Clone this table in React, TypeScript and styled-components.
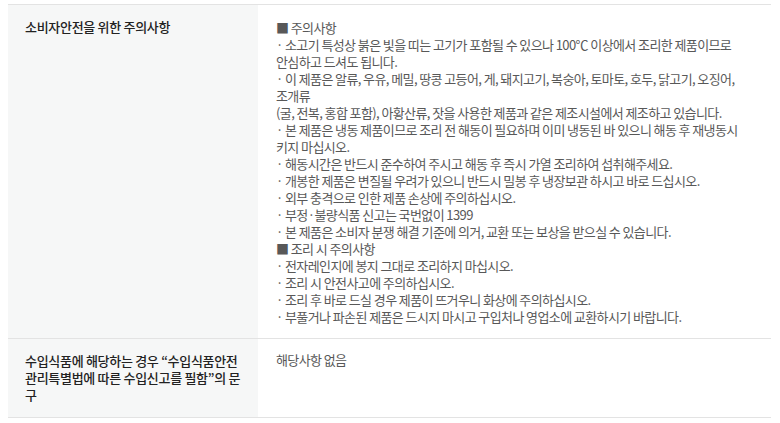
import React from 'react';
import styled, { createGlobalStyle } from 'styled-components';

const GlobalStyle = createGlobalStyle`
	body {
		margin: 0;
		background: #fff;
		font-family: "Noto Sans CJK KR", "Noto Sans", sans-serif;
	}
`;

const Wrapper = styled.div`
	padding: 4px 0 0 8px;
`;

const Table = styled.table`
	width: 763px;
	border-collapse: collapse;
	border-top: 1px solid #e3e3e3;
	table-layout: fixed;
`;

const Row = styled.tr`
	border-bottom: 1px solid #e3e3e3;
`;

const Label = styled.th`
	width: 250px;
	box-sizing: border-box;
	background: #f6f7f7;
	padding: 13px 17px 14px 17px;
	text-align: left;
	vertical-align: top;
	font-size: 13px;
	font-weight: 500;
	line-height: 17px;
	color: #222;
	letter-spacing: -0.3px;
`;

const Value = styled.td`
	padding: 14px 18px 13px 18px;
	vertical-align: top;
	font-size: 13px;
	line-height: 17px;
	color: #585858;
	letter-spacing: -0.6px;
`;

const Line = styled.div`
	white-space: nowrap;
`;

const Empty = styled.div`
	margin-top: -2px;
`;

const caution = [
	'■ 주의사항',
	'· 소고기 특성상 붉은 빛을 띠는 고기가 포함될 수 있으나 100℃ 이상에서 조리한 제품이므로',
	'안심하고 드셔도 됩니다.',
	'· 이 제품은 알류, 우유, 메밀, 땅콩 고등어, 게, 돼지고기, 복숭아, 토마토, 호두, 닭고기, 오징어,',
	'조개류',
	'(굴, 전복, 홍합 포함), 아황산류, 잣을 사용한 제품과 같은 제조시설에서 제조하고 있습니다.',
	'· 본 제품은 냉동 제품이므로 조리 전 해동이 필요하며 이미 냉동된 바 있으니 해동 후 재냉동시',
	'키지 마십시오.',
	'· 해동시간은 반드시 준수하여 주시고 해동 후 즉시 가열 조리하여 섭취해주세요.',
	'· 개봉한 제품은 변질될 우려가 있으니 반드시 밀봉 후 냉장보관 하시고 바로 드십시오.',
	'· 외부 충격으로 인한 제품 손상에 주의하십시오.',
	'· 부정·불량식품 신고는 국번없이 1399',
	'· 본 제품은 소비자 분쟁 해결 기준에 의거, 교환 또는 보상을 받으실 수 있습니다.',
	'■ 조리 시 주의사항',
	'· 전자레인지에 봉지 그대로 조리하지 마십시오.',
	'· 조리 시 안전사고에 주의하십시오.',
	'· 조리 후 바로 드실 경우 제품이 뜨거우니 화상에 주의하십시오.',
	'· 부풀거나 파손된 제품은 드시지 마시고 구입처나 영업소에 교환하시기 바랍니다.',
];

const App: React.FC = () => {
	return (
		<Wrapper>
			<GlobalStyle />
			<Table>
				<tbody>
					<Row>
						<Label>소비자안전을 위한 주의사항</Label>
						<Value>
							{caution.map((text, i) => (
								<Line key={i}>{text}</Line>
							))}
						</Value>
					</Row>
					<Row>
						<Label>수입식품에 해당하는 경우 “수입식품안전관리특별법에 따른 수입신고를 필함”의 문구</Label>
						<Value>
							<Empty>해당사항 없음</Empty>
						</Value>
					</Row>
				</tbody>
			</Table>
		</Wrapper>
	);
};

export default App;
